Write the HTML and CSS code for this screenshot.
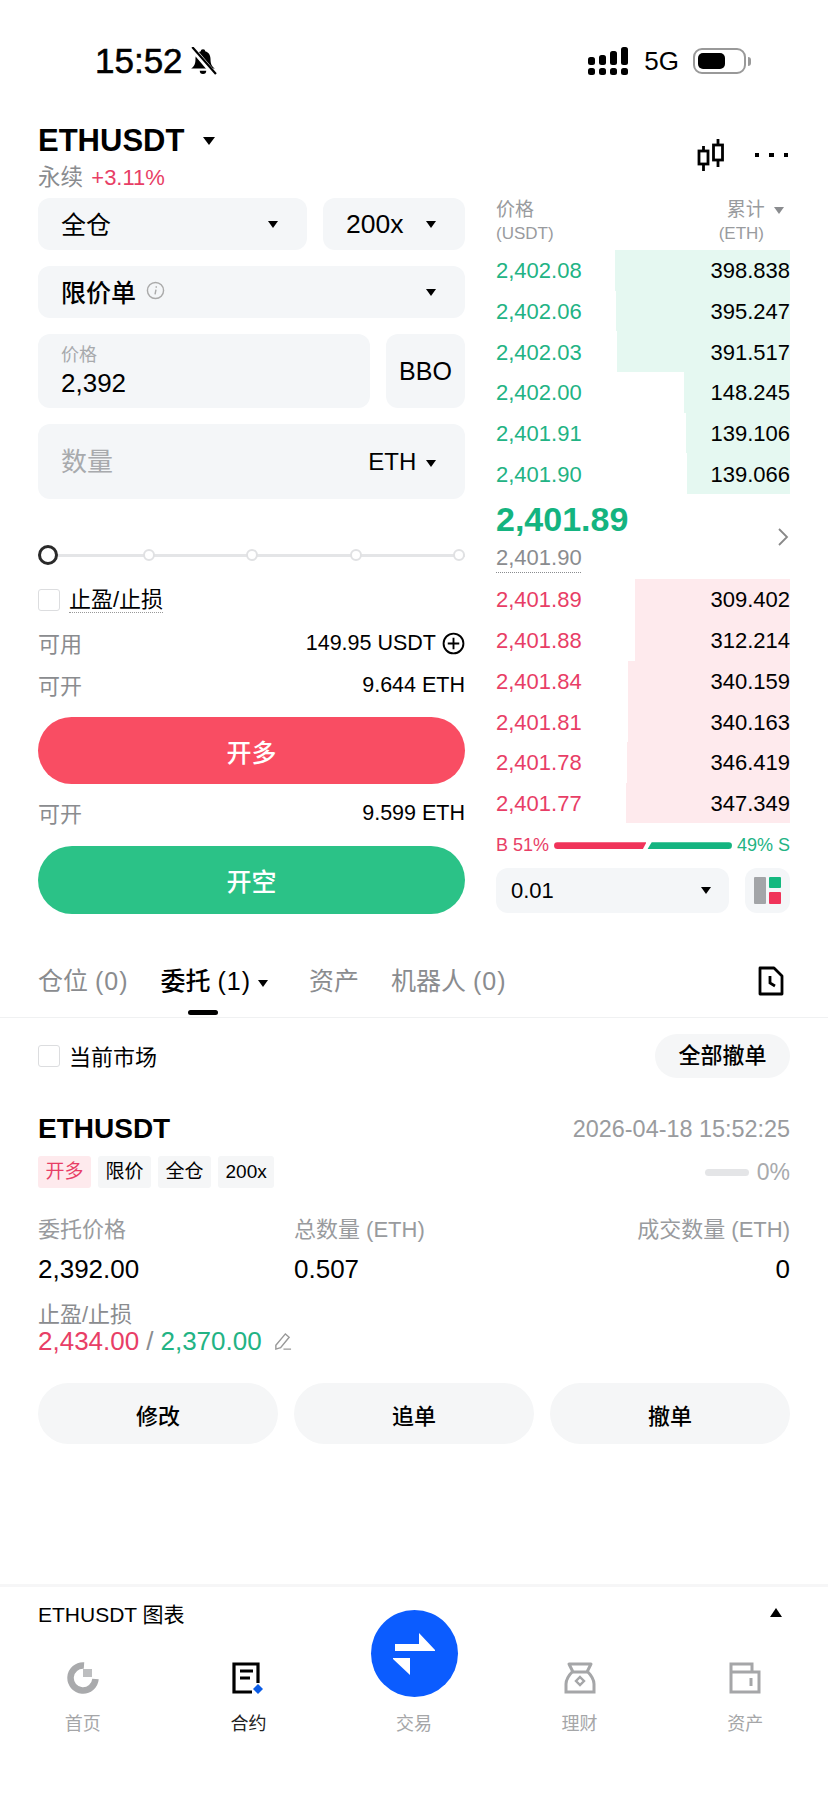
FILE: index.html
```html
<!DOCTYPE html>
<html lang="zh-CN">
<head>
    <meta charset="UTF-8">
    <meta name="viewport" content="width=device-width, initial-scale=1.0">
    <title>ETHUSDT</title>
    <link rel="stylesheet" href="styles.css">
</head>
<body>
<div class="status">
    <div class="status-left">
        <span class="clock">15:52</span>
        <svg class="bell" viewBox="0 0 26 26" width="28" height="28">
            <path d="M13 2c-1.400 0-2 .8-2 2-3.600 1-5 4-5 7.500 0 4-1 6-4 8.500h22c-3-2.500-4-4.500-4-8.500 0-3.500-1.400-6.500-5-7.500 0-1.200-.6-2-2-2z" fill="#000"/>
            <path d="M10 22h6a3 3 0 0 1-6 0z" fill="#000"/>
            <path d="M2 0l22 26" stroke="#fff" stroke-width="5"/>
            <path d="M3 0l22 25" stroke="#000" stroke-width="2"/>
        </svg>
    </div>
    <div class="status-right">
        <svg viewBox="0 0 41 28" width="41" height="28">
            <g fill="#000">
                <rect x="0" y="10" width="7" height="8" rx="2.500"/>
                <rect x="11" y="8" width="7" height="10" rx="2.500"/>
                <rect x="22" y="4" width="7" height="14" rx="2.500"/>
                <rect x="33" y="0" width="7" height="18" rx="2.500"/>
                <rect x="0" y="21" width="7" height="7" rx="2.500"/>
                <rect x="11" y="21" width="7" height="7" rx="2.500"/>
                <rect x="22" y="21" width="7" height="7" rx="2.500"/>
                <rect x="33" y="21" width="7" height="7" rx="2.500"/>
            </g>
        </svg>
        <span class="net">5G</span>
        <div class="battery"><div class="battery-fill"></div></div>
        <div class="battery-nub"></div>
    </div>
</div>

<div class="head">
    <div>
        <div class="symbol">ETHUSDT <span class="caret caret-big"></span></div>
        <div class="sub"><span class="grey">永续</span> <span class="red">+3.11%</span></div>
    </div>
    <div class="head-tools">
        <svg viewBox="0 0 28 32" width="28" height="32" fill="none" stroke="#000" stroke-width="2.800">
            <path d="M6.500 7v25M21 0v28"/>
            <rect x="2" y="12" width="9" height="13" fill="#fff"/>
            <rect x="16.500" y="6" width="9" height="15" fill="#fff"/>
        </svg>
        <div class="dots"><i></i><i></i><i></i></div>
    </div>
</div>

<div class="trade">
    <div class="form">
        <div class="form-row">
            <div class="field field-margin"><span class="cjk-up">全仓</span><span class="caret"></span></div>
            <div class="field field-lever"><span>200x</span><span class="caret"></span></div>
        </div>
        <div class="field field-type">
            <span class="type-name">限价单
                <svg viewBox="0 0 20 20" width="19" height="19" fill="none" stroke="#aaa" stroke-width="1.500">
                    <circle cx="10" cy="10" r="8.500"/>
                    <path d="M10.500 9l-1 5M10.800 5.500v1.500"/>
                </svg>
            </span>
            <span class="caret"></span>
        </div>
        <div class="form-row">
            <div class="field field-price">
                <span class="price-label">价格</span>
                <span class="price-value">2,392</span>
            </div>
            <div class="field field-bbo">BBO</div>
        </div>
        <div class="field field-qty">
            <span class="placeholder">数量</span>
            <span class="qty-unit">ETH <span class="caret"></span></span>
        </div>
        <div class="slider">
            <i class="knob"></i><i class="node"></i><i class="node"></i><i class="node"></i><i class="node"></i>
        </div>
        <div class="check-row">
            <span class="checkbox"></span>
            <span class="dotted">止盈/止损</span>
        </div>
        <div class="info-row info-first">
            <span class="grey">可用</span>
            <span class="info-value">149.95 USDT
                <svg viewBox="0 0 22 22" width="23" height="23" fill="none" stroke="#000" stroke-width="1.800">
                    <circle cx="11" cy="11" r="9.500"/>
                    <path d="M11 5.500v11M5.500 11h11"/>
                </svg>
            </span>
        </div>
        <div class="info-row"><span class="grey">可开</span><span class="info-value">9.644 ETH</span></div>
        <button class="action action-long">开多</button>
        <div class="info-row info-mid"><span class="grey">可开</span><span class="info-value">9.599 ETH</span></div>
        <button class="action action-short">开空</button>
    </div>

    <div class="book">
        <div class="book-head">
            <div>价格<br><span class="unit">(USDT)</span></div>
            <div class="book-head-right">累计 <span class="caret caret-grey"></span><br><span class="unit unit-right">(ETH)</span></div>
        </div>
        <div class="book-rows">
            <div class="book-row"><i class="depth depth-green" style="width: 175px"></i><span class="green">2,402.08</span><span>398.838</span></div>
            <div class="book-row"><i class="depth depth-green" style="width: 174px"></i><span class="green">2,402.06</span><span>395.247</span></div>
            <div class="book-row"><i class="depth depth-green" style="width: 173px"></i><span class="green">2,402.03</span><span>391.517</span></div>
            <div class="book-row"><i class="depth depth-green" style="width: 106px"></i><span class="green">2,402.00</span><span>148.245</span></div>
            <div class="book-row"><i class="depth depth-green" style="width: 104px"></i><span class="green">2,401.91</span><span>139.106</span></div>
            <div class="book-row"><i class="depth depth-green" style="width: 103px"></i><span class="green">2,401.90</span><span>139.066</span></div>
        </div>
        <div class="book-mid">
            <div>
                <div class="last-price">2,401.89</div>
                <div class="mark-price">2,401.90</div>
            </div>
            <svg viewBox="0 0 12 20" width="12" height="20" fill="none" stroke="#888" stroke-width="1.800"><path d="M2 2l8 8-8 8"/></svg>
        </div>
        <div class="book-rows">
            <div class="book-row"><i class="depth depth-red" style="width: 155px"></i><span class="red">2,401.89</span><span>309.402</span></div>
            <div class="book-row"><i class="depth depth-red" style="width: 155px"></i><span class="red">2,401.88</span><span>312.214</span></div>
            <div class="book-row"><i class="depth depth-red" style="width: 162px"></i><span class="red">2,401.84</span><span>340.159</span></div>
            <div class="book-row"><i class="depth depth-red" style="width: 162px"></i><span class="red">2,401.81</span><span>340.163</span></div>
            <div class="book-row"><i class="depth depth-red" style="width: 163px"></i><span class="red">2,401.78</span><span>346.419</span></div>
            <div class="book-row"><i class="depth depth-red" style="width: 164px"></i><span class="red">2,401.77</span><span>347.349</span></div>
        </div>
        <div class="ratio">
            <span class="red">B 51%</span>
            <i class="ratio-bar ratio-buy"></i>
            <i class="ratio-bar ratio-sell"></i>
            <span class="green">49% S</span>
        </div>
        <div class="book-tools">
            <div class="field field-step"><span>0.01</span><span class="caret"></span></div>
            <div class="field field-layout">
                <svg viewBox="0 0 27 27" width="27" height="27">
                    <rect x="0" y="0" width="12" height="27" rx="1" fill="#a3a5a8"/>
                    <rect x="15" y="0" width="12" height="11" rx="1" fill="#14b87f"/>
                    <rect x="15" y="15" width="12" height="12" rx="1" fill="#f0345a"/>
                </svg>
            </div>
        </div>
    </div>
</div>

<div class="tabs">
    <span class="tab">仓位 <small>(0)</small></span>
    <span class="tab tab-active">委托 <small>(1)</small> <span class="caret"></span></span>
    <span class="tab">资产</span>
    <span class="tab">机器人 <small>(0)</small></span>
    <svg class="tab-history" viewBox="0 0 26 30" width="26" height="30" fill="none" stroke="#000" stroke-width="2.800">
        <path d="M2 2h14l8 8v18H2z" stroke-linejoin="round"/>
        <path d="M12 10v7l5 3"/>
    </svg>
</div>

<div class="filter">
    <div class="filter-left"><span class="checkbox"></span><span class="cjk-up">当前市场</span></div>
    <div class="cancel-all">全部撤单</div>
</div>

<div class="order">
    <div class="order-top">
        <span class="order-symbol">ETHUSDT</span>
        <span class="order-time">2026-04-18 15:52:25</span>
    </div>
    <div class="order-tags">
        <span class="tag tag-red">开多</span>
        <span class="tag">限价</span>
        <span class="tag">全仓</span>
        <span class="tag">200x</span>
        <span class="fill"><i></i>0%</span>
    </div>
    <div class="order-grid">
        <div class="grey">委托价格</div>
        <div class="grey">总数量 (ETH)</div>
        <div class="grey align-right">成交数量 (ETH)</div>
        <div class="order-num">2,392.00</div>
        <div class="order-num">0.507</div>
        <div class="order-num align-right">0</div>
    </div>
    <div class="tpsl-label grey">止盈/止损</div>
    <div class="tpsl">
        <span class="red">2,434.00</span> <span class="slash">/</span> <span class="green">2,370.00</span>
        <svg viewBox="0 0 20 20" width="19" height="19" fill="none" stroke="#999" stroke-width="1.500">
            <path d="M3 14L13 2l4 3.500L8 16.500l-5 1.500zM11 18h8"/>
        </svg>
    </div>
    <div class="order-actions">
        <button class="pill">修改</button>
        <button class="pill">追单</button>
        <button class="pill">撤单</button>
    </div>
</div>

<div class="chart-bar">
    <span>ETHUSDT 图表</span>
    <span class="caret caret-up"></span>
</div>

<div class="nav">
    <div class="nav-item">
        <svg viewBox="0 0 32 32" width="32" height="32" fill="none">
            <path d="M17 3.500A12.500 12.500 0 1 0 28.500 17" stroke="#a9aaac" stroke-width="6.500"/>
            <rect x="16" y="7" width="9" height="8" fill="#bdbec0"/>
        </svg>
        <span>首页</span>
    </div>
    <div class="nav-item nav-active">
        <svg viewBox="0 0 32 32" width="32" height="32" fill="none">
            <path d="M26 21V2H2v28h18" stroke="#000" stroke-width="3.200"/>
            <path d="M8 9h13M8 16h10" stroke="#000" stroke-width="3"/>
            <path d="M26 22l5 5-5 5-5-5z" fill="#0b5ce6"/>
        </svg>
        <span>合约</span>
    </div>
    <div class="nav-item">
        <div class="nav-space"></div>
        <span>交易</span>
    </div>
    <div class="nav-item">
        <svg viewBox="0 0 32 32" width="32" height="32" fill="none" stroke="#a5a6a8" stroke-width="3">
            <path d="M5 2h22l-4 8H9z" stroke-linejoin="round"/>
            <path d="M9 9C5 13 2 17 2 22v8h28v-8c0-5-3-9-7-13"/>
            <path d="M16 15l4 4-4 4-4-4z" stroke-width="2.400"/>
        </svg>
        <span>理财</span>
    </div>
    <div class="nav-item">
        <svg viewBox="0 0 32 32" width="32" height="32" fill="none" stroke="#a5a6a8" stroke-width="3">
            <path d="M2 30V2h21v8h7v20zM2 10h21"/>
            <path d="M22 16v8"/>
        </svg>
        <span>资产</span>
    </div>
    <div class="trade-circle">
        <svg viewBox="0 0 87 87" width="87" height="87" fill="#fff">
            <path d="M24 34h24V23l16 17v1H24z"/>
            <path d="M63 48H39v17L22 49v-1z"/>
        </svg>
    </div>
</div>
</body>
</html>
```

FILE: styles.css
```css
* {
    box-sizing: border-box;
}
body {
    margin: 0;
    width: 828px;
    height: 1800px;
    overflow: hidden;
    background: #ffffff;
    color: #000;
    font-family: "Liberation Sans", "Noto Sans CJK SC", sans-serif;
    font-size: 22px;
}
i {
    display: block;
}
.grey {
    color: #8a8c8f;
}
.red {
    color: #e83e66;
}
.green {
    color: #22b384;
}
.cjk-up {
    margin-top: -3px;
}
.caret {
    display: inline-block;
    width: 0;
    height: 0;
    border-left: 5px solid transparent;
    border-right: 5px solid transparent;
    border-top: 7px solid #000;
}
.caret-big {
    margin-left: 10px;
    vertical-align: 6px;
    border-left-width: 6.500px;
    border-right-width: 6.500px;
    border-top-width: 8px;
}
.caret-grey {
    border-top-color: #8a8c8f;
    vertical-align: 2px;
    margin-left: 4px;
    margin-right: 6px;
}
.caret-up {
    border-top: 0;
    border-left-width: 6.500px;
    border-right-width: 6.500px;
    border-bottom: 9px solid #000;
}

/* status bar */
.status {
    height: 120px;
    padding: 46px 77px 0 95px;
    display: flex;
    justify-content: space-between;
    align-items: flex-start;
}
.status-left {
    display: flex;
    align-items: center;
    gap: 6px;
    height: 30px;
}
.clock {
    font-size: 35px;
    font-weight: 500;
    -webkit-text-stroke: 0.6px #000;
}
.status-right {
    display: flex;
    align-items: center;
    height: 30px;
}
.net {
    font-size: 26px;
    margin-left: 15px;
    margin-right: 14px;
}
.battery {
    width: 53px;
    height: 26px;
    border: 2px solid #999;
    border-radius: 9px;
    padding: 3px;
}
.battery-fill {
    width: 27px;
    height: 16px;
    background: #000;
    border-radius: 5px;
}
.battery-nub {
    width: 3px;
    height: 9px;
    margin-left: 2px;
    background: #999;
    border-radius: 0 3px 3px 0;
}

/* symbol header */
.head {
    height: 78px;
    padding: 0 40px 0 38px;
    display: flex;
    justify-content: space-between;
}
.symbol {
    font-size: 31px;
    font-weight: 700;
    line-height: 44px;
    margin-top: -1px;
}
.sub {
    font-size: 22.500px;
    line-height: 30px;
}
.sub .red {
    font-size: 22px;
    margin-left: 2px;
}
.head-tools {
    display: flex;
    align-items: center;
    gap: 30px;
    padding-top: 10px;
    height: 60px;
}
.dots {
    display: flex;
    gap: 10px;
}
.dots i {
    width: 4.500px;
    height: 4.500px;
    background: #000;
}

/* order form */
.trade {
    padding: 0 38px;
    display: grid;
    grid-template-columns: 427px 294px;
    gap: 31px;
    height: 737px;
}
.form-row {
    display: flex;
    gap: 16px;
}
.field {
    background: #f4f6f8;
    border-radius: 12px;
    display: flex;
    align-items: center;
    justify-content: space-between;
    font-size: 25px;
}
.field-margin {
    flex: 1;
    height: 52px;
    padding: 0 29px 0 23px;
}
.field-lever {
    width: 142px;
    height: 52px;
    padding: 0 29px 0 23px;
    font-size: 26.500px;
}
.field-type {
    height: 52px;
    margin: 16px 0;
    padding: 0 29px 0 23px;
}
.type-name {
    display: flex;
    align-items: center;
    gap: 10px;
    font-weight: 500;
    margin-top: -3px;
}
.field-price {
    flex: 1;
    height: 74px;
    padding: 0 23px;
    display: block;
}
.price-label {
    display: block;
    font-size: 18px;
    line-height: 22px;
    padding-top: 10px;
    color: #a8aaad;
}
.price-value {
    display: block;
    line-height: 30px;
    margin-top: 2px;
    font-size: 26px;
}
.field-bbo {
    width: 79px;
    height: 74px;
    justify-content: center;
}
.field-qty {
    height: 75px;
    margin-top: 16px;
    padding: 0 29px 0 23px;
}
.placeholder {
    font-size: 26px;
    color: #a8aaad;
    margin-top: -4px;
}
.qty-unit {
    font-size: 24px;
}
.qty-unit .caret {
    vertical-align: 3px;
    margin-left: 3px;
}
.slider {
    height: 20px;
    margin-top: 46px;
    display: flex;
    justify-content: space-between;
    align-items: center;
    background: linear-gradient(#e4e5e7, #e4e5e7) center / 100% 3px no-repeat;
}
.knob {
    width: 20px;
    height: 20px;
    margin-right: -7px;
    border: 3.500px solid #2a2a2a;
    border-radius: 50%;
    background: #fff;
}
.node {
    width: 12px;
    height: 12px;
    border: 2px solid #e0e1e3;
    border-radius: 50%;
    background: #fff;
}
.check-row {
    display: flex;
    align-items: center;
    gap: 9px;
    margin-top: 23px;
    height: 24px;
}
.checkbox {
    width: 22px;
    height: 22px;
    border: 1.500px solid #dcdddf;
    border-radius: 3px;
    flex: none;
}
.dotted {
    border-bottom: 1.500px dotted #999;
    line-height: 25px;
}
.info-row {
    display: flex;
    justify-content: space-between;
    align-items: center;
    height: 30px;
}
.info-row .grey {
    margin-top: -3px;
}
.info-first {
    margin-top: 16px;
    margin-bottom: 12px;
}
.info-value {
    display: flex;
    align-items: center;
    gap: 6px;
    font-size: 21.500px;
    margin-top: 1px;
}
.info-mid {
    margin-top: 14px;
}
.action {
    display: block;
    width: 100%;
    height: 67px;
    margin-top: 17px;
    border: none;
    border-radius: 34px;
    color: #fff;
    font-family: inherit;
    font-size: 25px;
    font-weight: 500;
}
.action-long {
    background: #f94d63;
}
.action-short {
    background: #2bc287;
    margin-top: 18px;
    height: 68px;
}

/* order book */
.book-head {
    height: 52px;
    display: flex;
    justify-content: space-between;
    font-size: 19px;
    line-height: 23px;
    color: #999b9e;
}
.book-head-right {
    text-align: right;
}
.unit {
    font-size: 17px;
}
.unit-right {
    margin-right: 26px;
}
.book-row {
    position: relative;
    height: 40.700px;
    padding-top: 2px;
    display: flex;
    justify-content: space-between;
    align-items: center;
}
.book-row span {
    position: relative;
}
.depth {
    position: absolute;
    top: 0;
    right: 0;
    bottom: 0;
}
.depth-green {
    background: #e5f8f1;
}
.depth-red {
    background: #feeaed;
}
.book-mid {
    height: 85px;
    padding-right: 1px;
    display: flex;
    justify-content: space-between;
    align-items: flex-end;
}
.book-mid svg {
    margin-bottom: 32px;
}
.last-price {
    font-size: 34px;
    font-weight: 700;
    color: #14b480;
    line-height: 42px;
    margin-top: 2px;
}
.mark-price {
    color: #8a8c8f;
    line-height: 27px;
    height: 29px;
    margin-bottom: 6px;
    width: 85px;
    border-bottom: 1.500px dotted #8a8c8f;
    margin-top: 4px;
    white-space: nowrap;
}
.ratio {
    display: flex;
    align-items: center;
    justify-content: space-between;
    height: 45px;
    font-size: 18px;
    white-space: nowrap;
}
.ratio-bar {
    height: 7px;
}
.ratio-buy {
    flex: 93 1 0;
    margin: 0 -3px 0 5px;
    background: #f0345a;
    clip-path: polygon(0 0, 100% 0, 96% 100%, 0 100%);
    border-radius: 4px 0 0 4px;
}
.ratio-sell {
    flex: 85 1 0;
    margin: 0 5px 0 4px;
    background: #14b480;
    clip-path: polygon(5% 0, 100% 0, 100% 100%, 0 100%);
    border-radius: 0 4px 4px 0;
}
.book-tools {
    display: flex;
    gap: 16px;
}
.field-step {
    flex: 1;
    height: 45px;
    padding: 0 18px 0 15px;
    font-size: 22px;
}
.field-layout {
    width: 45px;
    height: 45px;
    justify-content: center;
}

/* tabs */
.tabs {
    position: relative;
    height: 83px;
    padding: 28px 38px 0;
    display: flex;
    gap: 32px;
    font-size: 25px;
    border-bottom: 1.500px solid #f0f1f2;
    color: #8a8c8f;
    line-height: 36px;
}
.tabs small {
    font-size: 25px;
    letter-spacing: 1px;
}
.tab-active {
    position: relative;
    color: #000;
    font-weight: 500;
    margin-right: 9px;
}
.tab-active .caret {
    vertical-align: 3px;
}
.tab-active::after {
    content: "";
    position: absolute;
    left: 27px;
    bottom: 2px;
    width: 30px;
    height: 5px;
    border-radius: 3px;
    background: #000;
}
.tab-history {
    margin-left: auto;
    margin-right: 6px;
    margin-top: 3px;
}

/* current order */
.filter {
    padding: 16px 38px 0;
    display: flex;
    justify-content: space-between;
    align-items: center;
}
.filter-left {
    display: flex;
    align-items: center;
    gap: 9px;
    font-size: 22px;
}
.cancel-all {
    width: 135px;
    height: 44px;
    line-height: 44px;
    text-align: center;
    background: #f5f6f7;
    border-radius: 22px;
    font-weight: 500;
}
.order {
    padding: 0 38px;
}
.order-top {
    margin-top: 32px;
    height: 38px;
    display: flex;
    justify-content: space-between;
    align-items: center;
}
.order-symbol {
    font-size: 28px;
    font-weight: 700;
}
.order-time {
    font-size: 23.400px;
    color: #999b9e;
}
.order-tags {
    margin-top: 8px;
    display: flex;
    align-items: center;
    gap: 7px;
}
.tag {
    height: 32px;
    line-height: 32px;
    padding: 0 7.500px;
    font-size: 19px;
    background: #f5f6f7;
    border-radius: 3px;
}
.tag-red {
    background: #feeaed;
    color: #e83e66;
}
.fill {
    margin-left: auto;
    display: flex;
    align-items: center;
    gap: 8px;
    font-size: 23px;
    color: #a8aaad;
}
.fill i {
    width: 44px;
    height: 7px;
    background: #e4e5e7;
    border-radius: 4px;
}
.order-grid {
    margin-top: 26px;
    display: grid;
    grid-template-columns: 256px 1fr auto;
    row-gap: 9px;
    line-height: 31px;
}
.order-grid .grey {
    color: #999b9e;
}
.order-num {
    font-size: 26px;
}
.align-right {
    text-align: right;
}
.tpsl-label {
    margin-top: 16px;
    line-height: 28px;
}
.tpsl {
    display: flex;
    align-items: center;
    gap: 7px;
    margin-top: -2px;
    font-size: 26px;
    line-height: 28px;
}
.slash {
    color: #8a8c8f;
}
.tpsl svg {
    margin-left: 4px;
}
.order-actions {
    margin-top: 28px;
    display: grid;
    grid-template-columns: repeat(3, 1fr);
    gap: 16px;
}
.pill {
    height: 61px;
    border: none;
    border-radius: 31px;
    background: #f5f6f7;
    color: #000;
    font-family: inherit;
    font-size: 22px;
    font-weight: 500;
}

/* bottom */
.chart-bar {
    margin-top: 140px;
    height: 54px;
    padding: 0 46px 0 38px;
    border-top: 3px solid #f6f6f7;
    display: flex;
    justify-content: space-between;
    align-items: center;
    font-size: 21px;
}
.nav {
    position: relative;
    padding-top: 23.500px;
    display: grid;
    grid-template-columns: repeat(5, 1fr);
}
.nav-item {
    display: flex;
    flex-direction: column;
    align-items: center;
    gap: 15px;
    font-size: 18px;
    color: #a5a6a8;
}
.nav-item svg, .nav-space {
    width: 32px;
    height: 32px;
}
.nav-active {
    color: #222;
}
.trade-circle {
    position: absolute;
    left: 371px;
    top: -28px;
    width: 87px;
    height: 87px;
    border-radius: 50%;
    background: #0b5cff;
}
```
